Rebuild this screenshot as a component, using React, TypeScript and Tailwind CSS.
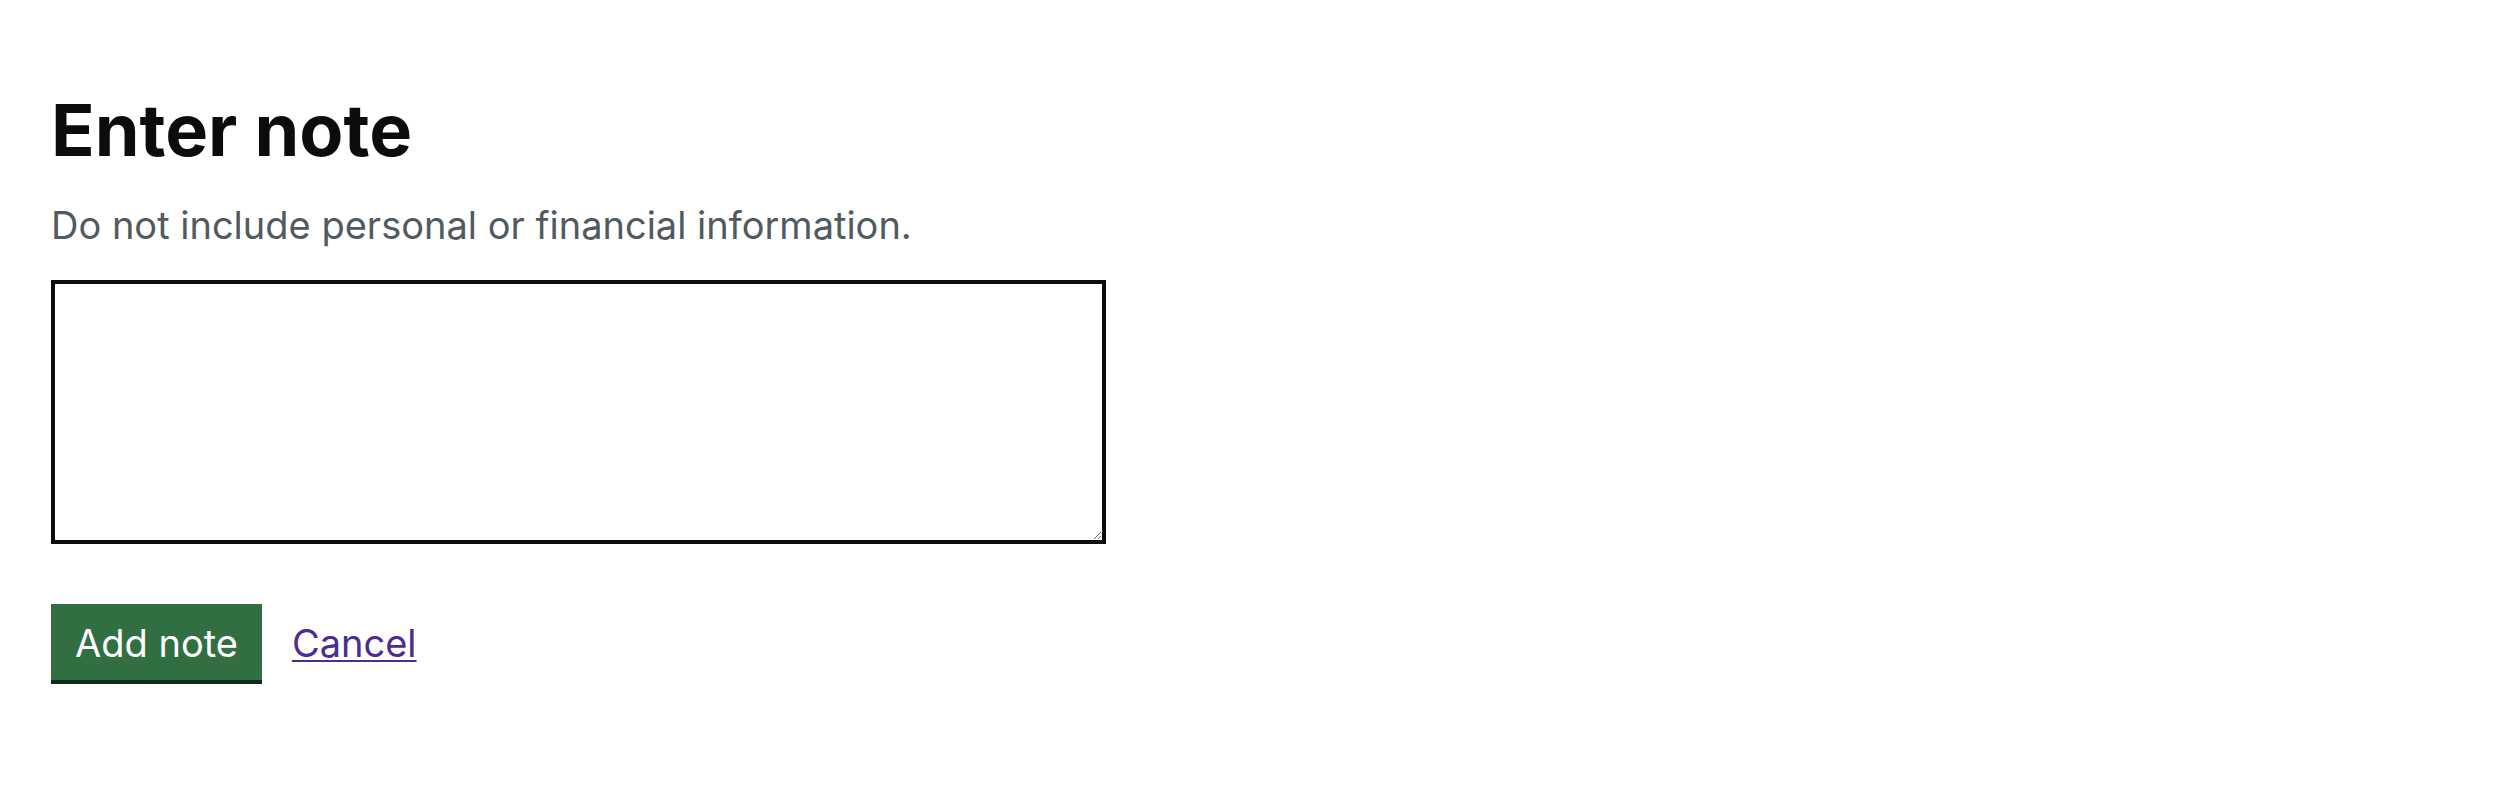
export default function App() {
    return (
        <div className="min-h-screen bg-white font-['Inter','Liberation_Sans',sans-serif] text-[#0b0c0c]">
            <main className="pl-[51px] pt-[90px]">
                <h1 className="mb-[30px] text-[72px] leading-[80px] font-bold">Enter note</h1>
                <div className="mb-[30px] text-[38px] leading-[50px] text-[#505a5f]">
                    Do not include personal or financial information.
                </div>
                <textarea
                    className="mb-[60px] block h-[264px] w-[1055px] border-4 border-[#0b0c0c] p-[10px] text-[38px] leading-[47px] outline-none"
                    rows={5}
                    aria-label="Enter note"
                />
                <div className="flex items-baseline gap-[30px]">
                    <button
                        type="button"
                        className="border-4 border-transparent bg-[#316f43] px-[20px] pt-[16px] pb-[14px] text-[38px] leading-[38px] text-white shadow-[0_4px_0_#0f2a16]"
                    >
                        Add note
                    </button>
                    <a
                        href="#"
                        className="text-[38px] leading-[50px] text-[#4c2c92] underline decoration-2 underline-offset-[3px]"
                    >
                        Cancel
                    </a>
                </div>
            </main>
        </div>
    );
}
